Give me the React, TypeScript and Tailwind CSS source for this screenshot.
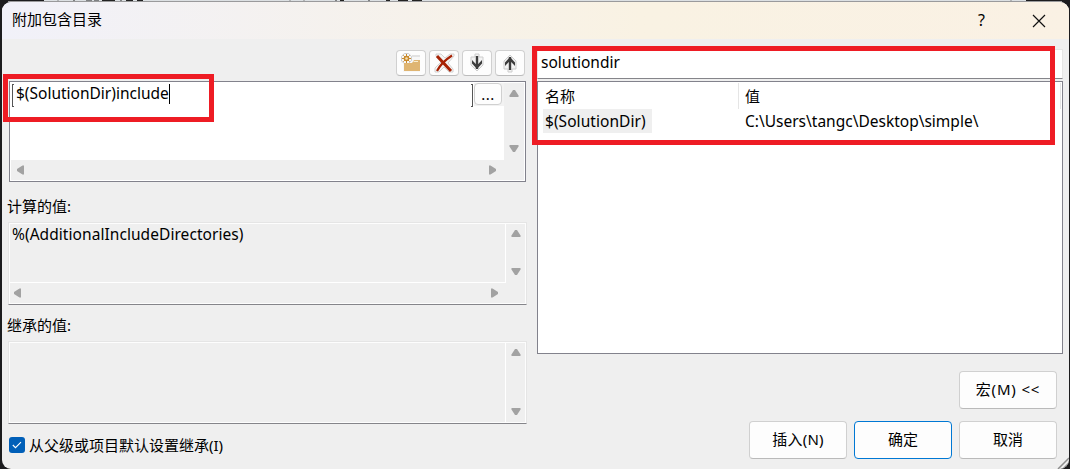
import React from "react";

type Dir = "up" | "down" | "left" | "right";

const arrowPath: Record<Dir, string> = {
  up: "M4 1h2L9.5 6.5V8h-9V6.500z",
  down: "M.5 1h9v1.500L6 8H4L.5 2.500z",
  left: "M8 .5v9H6.500L1 6V4L6.500 .5z",
  right: "M1 .5v9h1.500L8 6V4L2.500 .5z",
};

function Arrow({ dir }: { dir: Dir }) {
  return (
    <svg className="block shrink-0" width="10" height="10" viewBox="0 0 10 10">
      <path d={arrowPath[dir]} fill="#a2a2a2" />
    </svg>
  );
}

function ToolButton({ label, children }: { label: string; children: React.ReactNode }) {
  return (
    <button
      aria-label={label}
      className="flex h-[26px] w-[30px] items-center justify-center rounded-[4px] border border-[#d0d0d0] border-b-[#bcbcbc] bg-[#fdfdfd]"
    >
      <svg width="22" height="22" viewBox="0 0 22 22" className="block shrink-0">
        {children}
      </svg>
    </button>
  );
}

function DownArrow() {
  return (
    <>
      <path d="M9 2h4v3h4v8l-6 6-6-6V5h4z" fill="#f3f3f3" stroke="#cdcdcd" strokeWidth="1" />
      <path d="M11 4v13" stroke="#3d3d3d" strokeWidth="2.400" />
      <path d="M6 8v3.500l5 5.500 5-5.500V8l-5 5.200z" fill="#3d3d3d" />
    </>
  );
}

function PushButton({ children, primary }: { children: React.ReactNode; primary?: boolean }) {
  return (
    <button
      className={
        "flex h-[38px] w-[98px] items-center justify-center rounded-[4px] border bg-[#fdfdfd] pb-px text-[15px] " +
        (primary ? "border-[#0078d4]" : "border-[#d0d0d0] border-b-[#bababa]")
      }
    >
      {children}
    </button>
  );
}

function ReadOnlyBox({ text, horizontal }: { text?: string; horizontal?: boolean }) {
  return (
    <div className="-ml-px flex h-[83px] w-[519px] border border-[#e5e5e5] border-b-[#85858a]">
      <div className="flex flex-1 border border-[#fdfdfd]">
        <div className="flex w-[496px] flex-col">
          <div className="flex-1 border-r border-white pl-[2px] text-[15.5px] leading-[21px] tracking-[0.06px]">{text}</div>
          {horizontal && (
            <div className="flex h-[21px] items-center justify-between border-t border-white pr-[6px] pl-[3px]">
              <Arrow dir="left" />
              <Arrow dir="right" />
            </div>
          )}
        </div>
        <div className={"flex flex-1 flex-col items-center justify-between pt-[5px] " + (horizontal ? "pb-[26px]" : "pb-[5px]")}>
          <Arrow dir="up" />
          <Arrow dir="down" />
        </div>
      </div>
    </div>
  );
}

export default function App() {
  return (
    <div className="relative h-[469px] w-[1070px] overflow-hidden bg-[#1c1c1e] pt-[2px] pl-[2px] font-['Noto_Sans','Noto_Sans_CJK_SC',sans-serif] text-[15px] text-black">
      <svg className="absolute top-0 left-0" width="1070" height="12" viewBox="0 0 1070 12">
        <path d="M44 0h982v2H44z" fill="#dce0e3" />
        <path d="M58 0v2M290 0v2M304 0v2M1011 0v2" stroke="#8a8a8a" />
        <path d="M74 0v2M86 1h6M94 1h5M102 .5h13M121 0v2M126 .5h7M137 .5h6M336 0v2M340 .5h4M369 0v2M386 .5h4M398 .5h10M412 .5h10" stroke="#222" strokeWidth="1" />
        <path d="M8 1.500h1054" stroke="#9a9a9c" />
      </svg>

      <div className="relative h-[467px] w-[1067px] overflow-hidden rounded-[9px] bg-[#efefef]">
        <header className="flex h-[37px] items-center justify-between bg-linear-to-r from-[#f1f1f9] via-[#f9f2e3] via-60% to-[#faf1e4] pr-[23px] pl-[10px]">
          <h1 className="pb-[3px] text-[15px]">附加包含目录</h1>
          <div className="flex items-center gap-[47px]">
            <span className="pb-px text-[16px]">?</span>
            <svg width="14" height="14" viewBox="0 0 14 14">
              <path d="M1 1l12 12M13 1L1 13" stroke="#111" strokeWidth="1.200" fill="none" />
            </svg>
          </div>
        </header>

        <main className="flex">
          <section className="ml-[7px] w-[517px] shrink-0 pt-[11px]">
            <div className="flex justify-end gap-[3px] pr-[1px]">
              <ToolButton label="New line">
                <path d="M3 1h7l2 2h8v17H3v-9H1V4z" fill="#f7f7f7" />
                <path d="M12 4h8M1.500 9V4.500l3-3h4l3 3v4l-3 3h-4z" stroke="#cdcdcd" fill="none" />
                <path d="M4 11h8l2-3h6v11H4z" fill="#dfb572" />
                <path d="M13.500 9.500h4.500" stroke="#f9edcf" />
                <path d="M6.500 2v9M2 6.500h9M3.300 3.300l6.400 6.400M9.700 3.300l-6.400 6.400" stroke="#c98a2c" />
                <circle cx="6.500" cy="6.500" r="2.800" fill="#c98a2c" />
                <circle cx="6.500" cy="6.500" r="1.300" fill="#f6e0b4" />
              </ToolButton>
              <ToolButton label="Delete">
                <path d="M3 2h5l4 4 5-4h4v2l-6 7 5 6v3h-4l-5-5-5 5H2v-4l6-6-5-6z" fill="#f5f5f5" stroke="#d2d2d2" />
                <path d="M4 4l14 15" stroke="#a72204" strokeWidth="3" />
                <path d="M19 3.500C12 8 7 13 4 19" stroke="#a72204" strokeWidth="2.200" fill="none" />
              </ToolButton>
              <ToolButton label="Move down">
                <DownArrow />
              </ToolButton>
              <ToolButton label="Move up">
                <g transform="translate(0 22) scale(1 -1)">
                  <DownArrow />
                </g>
              </ToolButton>
            </div>

            <div className="mt-[5px] flex h-[101px] flex-col border border-[#82828c] bg-white p-px">
              <div className="flex h-[77px]">
                <div className="flex w-[493px] justify-between">
                  <div className="mt-px ml-px flex h-[23px] w-[461px] justify-between">
                    <div className="w-[2px] border-y border-l border-[#555]" />
                    <div className="flex flex-1 items-start pl-[2px] text-[15.5px] leading-[19px]">
                      <span>$(SolutionDir)include</span>
                      <span className="h-[20px] w-px bg-black" />
                    </div>
                    <div className="w-[2px] border-y border-r border-[#555]" />
                  </div>
                  <div className="h-[23px] w-[30px] bg-[#f2f2f2]">
                    <button className="flex h-[22px] w-[28px] items-center justify-center rounded-[4px] border border-[#d0d0d0] bg-[#fdfdfd] text-[15px] leading-none tracking-[0.4px]">
                      ...
                    </button>
                  </div>
                </div>
                <div className="flex flex-1 flex-col items-center justify-between bg-[#efefef] pt-[6px] pr-px pb-[6px]">
                  <Arrow dir="up" />
                  <Arrow dir="down" />
                </div>
              </div>
              <div className="flex flex-1 items-center justify-between bg-[#efefef] pr-[26px] pl-[5px]">
                <Arrow dir="left" />
                <Arrow dir="right" />
              </div>
            </div>

            <div className="-ml-[2px] flex h-[40px] items-center pt-[9px]">计算的值:</div>
            <ReadOnlyBox text="%(AdditionalIncludeDirectories)" horizontal />
            <div className="-ml-[2px] flex h-[36px] items-center pt-[5px]">继承的值:</div>
            <ReadOnlyBox />

            <label className="flex h-[42px] items-center gap-[4px]">
              <span className="flex h-4 w-4 items-center justify-center rounded-[3px] bg-[#005fb8]">
                <svg width="10" height="8" viewBox="0 0 10 8">
                  <path d="M.8 4l2.700 2.700L9 1.200" stroke="#fff" strokeWidth="1.100" fill="none" />
                </svg>
              </span>
              <span>从父级或项目默认设置继承(I)</span>
            </label>
          </section>

          <section className="ml-[11px] w-[526px] shrink-0 pt-[10px]">
            <div className="flex h-[30px] w-[526px] items-center border border-[#e5e5e5] border-b-[#85858a] bg-white pb-[3px] pl-[3px] text-[15.5px]">
              solutiondir
            </div>
            <div className="mt-[2px] h-[273px] w-[526px] border border-[#82828c] bg-white p-px">
              <div className="flex h-[26px]">
                <div className="flex w-[200px] items-center border-r border-[#e5e5e5] pl-[6px]">名称</div>
                <div className="flex flex-1 items-center border-r border-[#e5e5e5] pl-[6px]">值</div>
              </div>
              <div className="flex h-[24px] text-[15.5px]">
                <div className="w-[200px] pl-[4px]">
                  <span className="flex h-[24px] w-[109px] items-center bg-[#efefef] pt-[2px] pl-[2px] tracking-[0.05px]">$(SolutionDir)</span>
                </div>
                <div className="flex items-center pt-[2px] pl-[6px]">C:\Users\tangc\Desktop\simple\</div>
              </div>
            </div>
            <div className="mt-[17px] flex flex-col items-end gap-[12px] pr-[6px]">
              <PushButton>
                <span className="tracking-[0.85px]">宏(M) &lt;&lt;</span>
              </PushButton>
              <div className="flex gap-[7px]">
                <PushButton>
                  <span className="tracking-[0.2px]">插入(N)</span>
                </PushButton>
                <PushButton primary>确定</PushButton>
                <PushButton>取消</PushButton>
              </div>
            </div>
          </section>
        </main>
        <svg className="absolute right-0 bottom-0" width="12" height="12" viewBox="0 0 12 12">
          <path d="M1 12L12 1M6 12l6-6" stroke="#8c8c8c" strokeWidth="1.500" />
          <path d="M9 12l3-3v3z" fill="#222" />
        </svg>
      </div>

      <div className="pointer-events-none absolute top-[74px] left-[3px] h-[48px] w-[211px] border-[5px] border-[#ee1c24]" />
      <div className="pointer-events-none absolute top-[46px] left-[532px] h-[99px] w-[523px] border-[5px] border-[#ee1c24]" />
    </div>
  );
}
